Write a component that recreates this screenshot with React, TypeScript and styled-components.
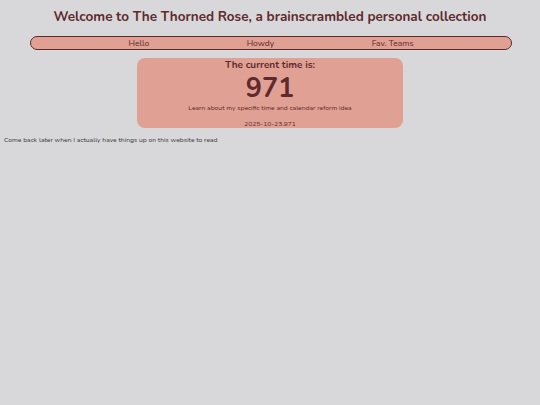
import React from "react";
import styled, { createGlobalStyle } from "styled-components";

const Global = createGlobalStyle`
  html, body { margin: 0; padding: 0; background: #d8d8da; }
  body { font-family: "Nunito", "Noto Sans", "Open Sans", sans-serif; color: #5e2a2c; }
`;

const Page = styled.div`
  min-height: 405px;
  padding: 0 4px;
  box-sizing: border-box;
`;

const Title = styled.h1`
  margin: 0;
  padding-top: 8px;
  text-align: center;
  font-size: 13.5px;
  font-weight: 700;
  line-height: 18px;
  color: #5e2a2c;
`;

const Nav = styled.nav`
  margin: 10px 0 0 26px;
  width: 482px;
  height: 14px;
  box-sizing: border-box;
  border: 1px solid #5e2a2c;
  border-radius: 8px;
  background: #e0a093;
  display: flex;
  justify-content: space-evenly;
  align-items: center;
`;

const NavLink = styled.a`
  font-size: 8.5px;
  color: #5e2a2c;
  text-decoration: none;
`;

const Card = styled.section`
  margin: 8px auto 0;
  width: 266px;
  height: 70px;
  box-sizing: border-box;
  background: #e0a093;
  border-radius: 8px;
  display: flex;
  flex-direction: column;
  align-items: center;
  padding-top: 1px;
`;

const CardHeading = styled.div`
  font-size: 10px;
  font-weight: 700;
  line-height: 13px;
`;

const BigTime = styled.div`
  font-size: 27px;
  font-weight: 700;
  line-height: 26px;
  margin-top: 4px;
`;

const Small = styled.div<{ $top?: number }>`
  font-size: 6.75px;
  line-height: 8px;
  margin-top: ${(p) => p.$top ?? 0}px;
`;

const Note = styled.p`
  margin: 8px 0 0;
  font-size: 6.75px;
  line-height: 8px;
  color: #3a3a3a;
`;

export default function App() {
  return (
    <>
      <Global />
      <Page>
        <Title>Welcome to The Thorned Rose, a brainscrambled personal collection</Title>
        <Nav>
          <NavLink href="#">Hello</NavLink>
          <NavLink href="#">Howdy</NavLink>
          <NavLink href="#">Fav. Teams</NavLink>
        </Nav>
        <Card>
          <CardHeading>The current time is:</CardHeading>
          <BigTime>971</BigTime>
          <Small $top={2}>Learn about my specific time and calendar reform idea</Small>
          <Small $top={8}>2025-10-23.971</Small>
        </Card>
        <Note>Come back later when I actually have things up on this website to read</Note>
      </Page>
    </>
  );
}
